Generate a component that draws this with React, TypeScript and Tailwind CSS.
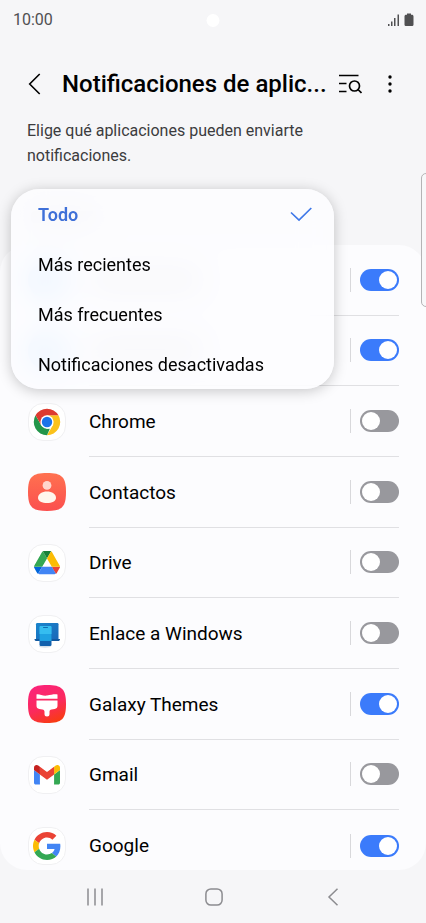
import { useState, type ReactNode } from 'react'

type AppRow = {
  id: string
  name?: string
  enabled: boolean
  icon?: ReactNode
}

const filters = ['Todo', 'Más recientes', 'Más frecuentes', 'Notificaciones desactivadas']

function ChromeIcon() {
  return (
    <svg viewBox="0 0 38 38" className="size-full">
      <path d="M31.100 12H19l6.100 10.500L19 33A14 14 0 0 0 31.100 12z" fill="#fbc21b" />
      <path d="M19 33A14 14 0 0 1 6.900 12l6 10.500 6.100 3.500h3z" fill="#23964a" />
      <path d="M6.900 12 13 22.500 19 12h12.100A14 14 0 0 0 6.900 12z" fill="#dd3b30" />
      <circle cx="19" cy="19" r="7" fill="#fff" />
      <circle cx="19" cy="19" r="5.500" fill="#1a73e8" />
    </svg>
  )
}

function ContactsIcon() {
  return (
    <svg viewBox="0 0 38 38" className="size-full">
      <defs>
        <linearGradient id="contacts" x1="0" y1="0" x2="0" y2="1">
          <stop offset="0" stopColor="#ff7150" />
          <stop offset="1" stopColor="#fb4f4e" />
        </linearGradient>
      </defs>
      <path d="M19 0C34 0 38 4 38 19S34 38 19 38 0 34 0 19 4 0 19 0z" fill="url(#contacts)" />
      <circle cx="19" cy="12.400" r="4.400" fill="#ffd5cc" />
      <path d="M10 25c0-4 4-6.500 9-6.500s9 2.500 9 6.500c0 3-4 5-9 5s-9-2-9-5z" fill="#fff6ee" />
    </svg>
  )
}

function DriveIcon() {
  return (
    <svg viewBox="0 0 87.3 78" className="w-[26px]">
      <path d="m6.600 66.850 3.850 6.650c.8 1.400 1.950 2.500 3.300 3.300l13.750-23.800h-27.500c0 1.550.4 3.100 1.200 4.500z" fill="#0066da" />
      <path d="m43.650 25-13.750-23.800c-1.350.8-2.500 1.900-3.300 3.300l-25.400 44a9.060 9.060 0 0 0-1.200 4.500h27.500z" fill="#34a853" />
      <path d="m73.550 76.800c1.350-.8 2.500-1.900 3.300-3.300l1.600-2.750 7.650-13.250c.8-1.400 1.200-2.950 1.200-4.500h-27.502l5.852 11.500z" fill="#ea4335" />
      <path d="m43.650 25 13.750-23.800c-1.350-.8-2.900-1.200-4.500-1.200h-18.500c-1.600 0-3.150.45-4.500 1.200z" fill="#188038" />
      <path d="m59.800 53h-32.300l-13.750 23.800c1.350.8 2.900 1.200 4.500 1.200h50.800c1.600 0 3.150-.45 4.500-1.200z" fill="#4285f4" />
      <path d="m73.400 26.500-12.700-22c-.8-1.400-1.950-2.500-3.300-3.300l-13.750 23.800 16.150 28h27.450c0-1.550-.4-3.100-1.200-4.500z" fill="#fbbc04" />
    </svg>
  )
}

function WindowsLinkIcon() {
  return (
    <svg viewBox="1 1 36 36" className="size-full">
      <defs>
        <linearGradient id="laptop" x1="0" y1="0" x2="1" y2="1">
          <stop offset="0" stopColor="#1a86cc" />
          <stop offset="1" stopColor="#1a66b8" />
        </linearGradient>
      </defs>
      <ellipse cx="17" cy="31.500" rx="6" ry="1.200" fill="#d5dfe9" />
      <rect x="8" y="8" width="22.500" height="17" rx="1.200" fill="url(#laptop)" />
      <path d="M6.500 24h25.500c0 1.400-.8 2-2 2H8.500c-1.200 0-2-.6-2-2z" fill="#14599f" />
      <rect x="11.500" y="11" width="12" height="20" rx="1.200" fill="#1261ad" />
      <path d="M11.500 12.200c0-.7.5-1.200 1.200-1.200h9.600c.7 0 1.200.5 1.200 1.200V26h-12z" fill="#1fa2e2" />
      <path d="M11.500 12.200c0-.7.5-1.200 1.200-1.200h9.600c.7 0 1.200.5 1.200 1.200V19h-12z" fill="#35bdf0" />
      <rect x="15" y="12" width="5" height="1" rx="0.500" fill="#0f6db3" />
    </svg>
  )
}

function ThemesIcon() {
  return (
    <svg viewBox="0 0 38 38" className="size-full">
      <defs>
        <linearGradient id="themes" x1="0.300" y1="0" x2="0.700" y2="1">
          <stop offset="0" stopColor="#fb2379" />
          <stop offset="0.550" stopColor="#fb2a5c" />
          <stop offset="1" stopColor="#f83c10" />
        </linearGradient>
      </defs>
      <path d="M19 0C34 0 38 4 38 19S34 38 19 38 0 34 0 19 4 0 19 0z" fill="url(#themes)" />
      <path d="M8.500 9.400c3.500-.5 6 1.800 10.500 1.200 4-.6 7-1.600 10.500-1.100v4.300h-21z" fill="#fff" />
      <path d="M8.500 15.500h21v5.300c0 1.900-1 2.800-2.800 3.200l-3.200.5c-1.300.3-2 1-2 2.200v2.300a2.500 2.500 0 0 1-5 0v-2.300c0-1.200-.7-1.900-2-2.200l-3.200-.5c-1.800-.4-2.800-1.300-2.800-3.200z" fill="#fff" />
    </svg>
  )
}

function GmailIcon() {
  return (
    <svg viewBox="52 42 88 66" className="w-[26px]">
      <path fill="#4285f4" d="M58 108h14V74L52 59v43c0 3.320 2.690 6 6 6" />
      <path fill="#34a853" d="M120 108h14c3.320 0 6-2.690 6-6V59l-20 15" />
      <path fill="#fbbc04" d="M120 48v26l20-15v-8c0-7.420-8.470-11.650-14.400-7.200" />
      <path fill="#ea4335" d="M72 74V48l24 18 24-18v26L96 92" />
      <path fill="#c5221f" d="M52 51v8l20 15V48l-5.600-4.200c-5.940-4.450-14.400-.22-14.400 7.200" />
    </svg>
  )
}

function GoogleIcon() {
  return (
    <svg viewBox="0 0 48 48" className="size-7">
      <path fill="#ea4335" d="M24 9.500c3.540 0 6.710 1.220 9.210 3.600l6.850-6.850C35.900 2.380 30.470 0 24 0 14.620 0 6.510 5.380 2.560 13.220l7.980 6.190C12.430 13.720 17.740 9.500 24 9.500z" />
      <path fill="#4285f4" d="M46.980 24.550c0-1.570-.15-3.090-.38-4.550H24v9.020h12.940c-.58 2.960-2.260 5.480-4.780 7.180l7.730 6c4.510-4.180 7.090-10.360 7.090-17.650z" />
      <path fill="#fbbc05" d="M10.530 28.590c-.48-1.450-.76-2.990-.76-4.590s.27-3.140.76-4.590l-7.980-6.190C.92 16.460 0 20.120 0 24c0 3.880.92 7.540 2.560 10.780l7.970-6.190z" />
      <path fill="#34a853" d="M24 48c6.480 0 11.930-2.130 15.890-5.810l-7.730-6c-2.150 1.450-4.920 2.300-8.160 2.300-6.260 0-11.570-4.220-13.470-9.910l-7.980 6.190C6.510 42.620 14.620 48 24 48z" />
    </svg>
  )
}

function WhiteTile({ children }: { children: ReactNode }) {
  return (
    <span className="flex size-full items-center justify-center overflow-hidden rounded-[15px] border border-[#f0f0f2] bg-white">
      {children}
    </span>
  )
}

const initialRows: AppRow[] = [
  { id: 'row-1', enabled: true },
  { id: 'row-2', enabled: true },
  { id: 'chrome', name: 'Chrome', enabled: false, icon: <WhiteTile><ChromeIcon /></WhiteTile> },
  { id: 'contacts', name: 'Contactos', enabled: false, icon: <ContactsIcon /> },
  { id: 'drive', name: 'Drive', enabled: false, icon: <WhiteTile><DriveIcon /></WhiteTile> },
  { id: 'windows', name: 'Enlace a Windows', enabled: false, icon: <WhiteTile><WindowsLinkIcon /></WhiteTile> },
  { id: 'themes', name: 'Galaxy Themes', enabled: true, icon: <ThemesIcon /> },
  { id: 'gmail', name: 'Gmail', enabled: false, icon: <WhiteTile><GmailIcon /></WhiteTile> },
  { id: 'google', name: 'Google', enabled: true, icon: <WhiteTile><GoogleIcon /></WhiteTile> },
]

export default function App() {
  const [rows, setRows] = useState(initialRows)
  const [filter, setFilter] = useState('Todo')

  function toggle(id: string) {
    setRows(rows.map(r => (r.id === id ? { ...r, enabled: !r.enabled } : r)))
  }

  return (
    <div className="relative flex min-h-screen flex-col overflow-hidden bg-[#f6f6f8] font-['Roboto',sans-serif] text-black">
      {/* Status bar */}
      <div className="relative flex h-10 items-center justify-between pl-[13px] pr-3 text-[#505052]">
        <span className="text-base">10:00</span>
        <span className="absolute left-1/2 size-[13px] -translate-x-1/2 rounded-full bg-white" />
        <svg viewBox="0 0 26 14" className="h-[14px] w-[26px]" fill="currentColor">
          <rect x="0" y="11" width="1.500" height="2" />
          <rect x="3" y="8.500" width="1.500" height="4.500" />
          <rect x="6" y="5" width="1.500" height="8" />
          <rect x="9.500" y="1.500" width="1.500" height="11.500" />
          <path d="M19 .5h4v1.200h.8c1 0 1.700.7 1.700 1.700v8c0 1-.7 1.700-1.700 1.700h-5.600c-1 0-1.700-.7-1.700-1.700v-8c0-1 .7-1.700 1.700-1.700h.8z" />
        </svg>
      </div>

      {/* Header */}
      <header className="flex h-[77px] items-center pl-6 pr-6 pt-[10px]">
        <button aria-label="Atrás" className="flex h-10 w-[38px] items-center">
          <svg viewBox="0 0 22 22" className="size-[22px]" fill="none" stroke="currentColor" strokeWidth="1.600">
            <path d="M15.700 1 5.700 11l10 10" />
          </svg>
        </button>
        <h1 className="flex-1 whitespace-nowrap text-2xl font-medium">Notificaciones de aplic...</h1>
        <button aria-label="Buscar" className="flex h-10 w-6 items-center justify-center">
          <svg viewBox="0 0 24 20" className="h-5 w-6" fill="none" stroke="currentColor" strokeWidth="1.700">
            <path d="M1 1.500h19.500M1 9.500h7.500M1 17.500h7.500" />
            <circle cx="16.500" cy="12" r="5" />
            <path d="m20 15.500 3.500 3.500" />
          </svg>
        </button>
        <button aria-label="Más opciones" className="ml-4 flex h-10 w-6 items-center justify-center">
          <svg viewBox="0 0 4 18" className="h-[18px] w-1" fill="currentColor">
            <circle cx="2" cy="2" r="1.700" />
            <circle cx="2" cy="9" r="1.700" />
            <circle cx="2" cy="16" r="1.700" />
          </svg>
        </button>
      </header>

      <p className="max-w-[340px] pl-[27px] pt-px text-base leading-[25px] text-[#3c3c3e]">
        Elige qué aplicaciones pueden enviarte notificaciones.
      </p>

      {/* Filter menu, opened over the list */}
      <div className="relative px-[11px] pt-[21px]">
        <div className="flex h-14 items-center pl-5">
          <span className="h-3 w-16 rounded bg-[#c8c8cc]" />
        </div>
        <div
          role="listbox"
          aria-label="Filtro"
          className="absolute top-[21px] z-10 w-[323px] overflow-hidden rounded-[28px] bg-[#fdfdff]/85 shadow-[0_2px_14px_rgba(0,0,0,0.22)] backdrop-blur-lg"
        >
          {filters.map(f => (
            <button
              key={f}
              role="option"
              aria-selected={f === filter}
              onClick={() => setFilter(f)}
              className={`flex h-[50px] w-full items-center justify-between pl-[27px] pr-[22px] pt-0.5 text-left text-lg ${f === filter ? 'font-semibold text-[#3f70d8]' : ''}`}
            >
              {f}
              {f === filter && (
                <svg viewBox="0 0 22 16" className="h-4 w-[22px]" fill="none" stroke="#3f78e8" strokeWidth="1.700">
                  <path d="M1 5.500 9 13 21.300 1" />
                </svg>
              )}
            </button>
          ))}
        </div>
      </div>

      {/* App list */}
      <main className="flex flex-1 flex-col overflow-hidden rounded-[27px] bg-[#fcfcfe]">
        <ul className="-mb-[11px] grid flex-1 auto-rows-fr">
          {rows.map((row, i) => (
            <li key={row.id} className="flex min-h-[60px] items-stretch pl-7 pr-[27px]">
              <span className="flex w-[61px] items-center">
                <span className={`size-[38px] ${row.icon ? '' : 'rounded-full bg-[#8cc4ff]'}`}>{row.icon}</span>
              </span>
              <div className={`flex flex-1 items-center ${i < rows.length - 1 ? 'border-b border-[#e0e0e3]' : ''}`}>
                {row.name ? (
                  <label htmlFor={row.id} className="flex-1 pt-0.5 text-[19px]">{row.name}</label>
                ) : (
                  <span className="flex-1"><span className="block h-3 w-28 rounded bg-[#b0b0b4]" /></span>
                )}
                <span className="h-6 w-px bg-[#d8d8db]" />
                <input
                  id={row.id}
                  type="checkbox"
                  role="switch"
                  aria-label={row.name ?? 'Aplicación'}
                  checked={row.enabled}
                  onChange={() => toggle(row.id)}
                  className="ml-[9px] h-[22px] w-[39px] cursor-pointer appearance-none rounded-full bg-[#98989d] p-[2px] before:block before:size-[18px] before:rounded-full before:bg-white checked:bg-[#3b7bfb] checked:before:ml-[17px]"
                />
              </div>
            </li>
          ))}
        </ul>
      </main>

      {/* Edge panel handle */}
      <div className="absolute -right-1 top-[173px] h-[134px] w-[9px] rounded-l-[5px] border border-[#b4b4b6] bg-[#f8f8fa]" />

      {/* Navigation bar */}
      <nav className="grid h-[53px] grid-cols-3 items-center justify-items-center pl-9 pr-[34px] text-[#8c8c90]">
        <button aria-label="Recientes">
          <svg viewBox="0 0 18 18" className="size-[18px]" fill="none" stroke="currentColor" strokeWidth="1.500">
            <path d="M2 .5v17M9 .5v17M16 .5v17" />
          </svg>
        </button>
        <button aria-label="Inicio">
          <svg viewBox="0 0 18 18" className="size-[18px]" fill="none" stroke="currentColor" strokeWidth="1.500">
            <rect x="0.900" y="0.900" width="16.200" height="16.200" rx="5" />
          </svg>
        </button>
        <button aria-label="Volver">
          <svg viewBox="0 0 18 18" className="size-[18px]" fill="none" stroke="currentColor" strokeWidth="1.500">
            <path d="M13.500.7 5 9l8.500 8.300" />
          </svg>
        </button>
      </nav>
    </div>
  )
}
